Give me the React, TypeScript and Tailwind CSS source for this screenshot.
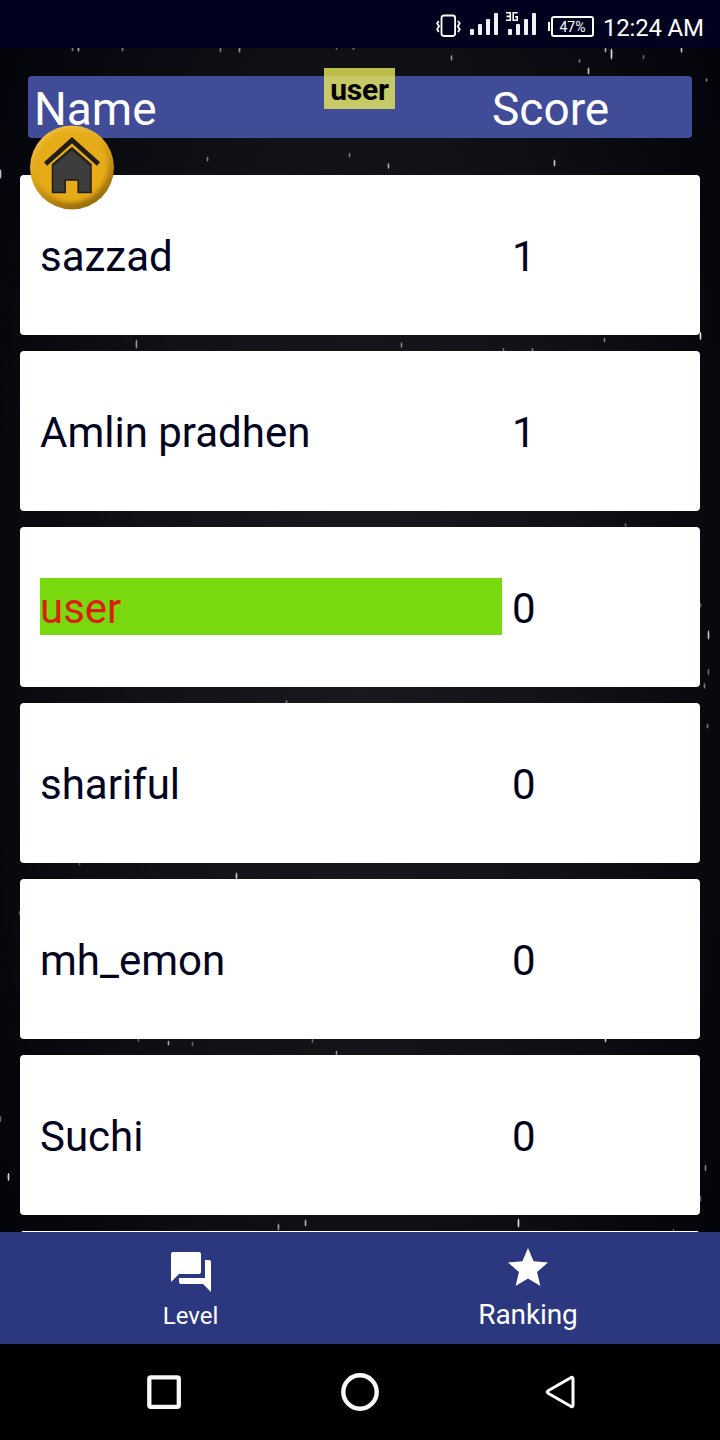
import React from "react";
import { MdForum, MdStar } from "react-icons/md";

interface Player {
  name: string;
  score: number;
}

const CURRENT_USER = "user";

const players: Player[] = [
  { name: "sazzad", score: 1 },
  { name: "Amlin pradhen", score: 1 },
  { name: "user", score: 0 },
  { name: "shariful", score: 0 },
  { name: "mh_emon", score: 0 },
  { name: "Suchi", score: 0 },
];

// x, y, length, opacity
const stars: number[][] = [
  [72, 1, 5, 0.5], [78, 1, 6, 0.7], [122, 1, 5, 0.5], [220, 2, 5, 0.5],
  [239, 2, 6, 0.6], [336, 0, 4, 0.4], [353, 0, 4, 0.5], [451, 10, 6, 0.6],
  [605, 2, 5, 0.7], [611, 6, 11, 0.9], [643, 9, 5, 0.4], [681, 2, 6, 0.8],
  [579, 13, 4, 0.5], [588, 23, 7, 0.8], [706, 32, 4, 0.5], [207, 111, 5, 0.5],
  [349, 107, 5, 0.5], [388, 118, 6, 0.7], [554, 115, 7, 0.8], [0, 126, 9, 0.8],
  [136, 296, 9, 0.6], [401, 297, 6, 0.5], [503, 302, 4, 0.5], [532, 302, 4, 0.5],
  [604, 292, 5, 0.5], [700, 288, 8, 0.9], [625, 477, 4, 0.4], [700, 557, 5, 0.4],
  [708, 587, 9, 0.8], [708, 624, 7, 0.4], [704, 638, 6, 0.5], [286, 654, 4, 0.5],
  [707, 678, 5, 0.5], [79, 816, 4, 0.3], [236, 828, 7, 0.8], [19, 865, 5, 0.3],
  [138, 992, 4, 0.4], [168, 995, 5, 0.7], [192, 996, 5, 0.4], [312, 993, 4, 0.4],
  [336, 1005, 5, 0.6], [605, 992, 5, 0.8], [0, 1071, 6, 0.4], [8, 1129, 8, 0.9],
  [705, 1120, 7, 0.5], [700, 1151, 6, 0.4], [278, 1179, 7, 0.6], [305, 1175, 7, 0.7],
  [518, 1175, 9, 0.9], [673, 1182, 3, 0.3],
];

const NightSky: React.FC = () => (
  <svg className="absolute inset-0" width="720" height="1184" viewBox="0 0 720 1184">
    {stars.map(([x, y, len, opacity], index) => (
      <ellipse key={index} cx={x + 0.5} cy={y} rx={0.9} ry={len / 2} fill="#e8edf2" opacity={opacity} />
    ))}
  </svg>
);

const SignalBars: React.FC = () => (
  <svg width="28" height="22" viewBox="0 0 28 22" fill="#f1f1f8">
    <rect x="0" y="16" width="4" height="6" rx="1" />
    <rect x="8" y="11" width="4" height="11" rx="1" />
    <rect x="16" y="6" width="4" height="16" rx="1" />
    <rect x="24" y="0" width="4" height="22" rx="1" />
  </svg>
);

const StatusBar: React.FC = () => (
  <div className="flex h-12 items-start bg-[#00021e] pl-[436px] text-white">
    <svg className="mt-[14px]" width="25" height="24" viewBox="0 0 25 24" fill="none" stroke="#fff" strokeWidth="1.8">
      <rect x="5.5" y="1.5" width="13.6" height="20.5" rx="2.4" />
      <path d="M2.7 7l-1.5 2.3 1.8 3-1.8 3 1.5 2.7" />
      <path d="M22 7l1.7 2.3-1.9 3 1.9 3L22 18" />
    </svg>
    <div className="mt-[13px] ml-[9px]">
      <SignalBars />
    </div>
    <div className="relative mt-[13px] ml-[10px]">
      <SignalBars />
      {/* covers the top of the first bars */}
      <svg className="absolute -top-px -left-[2px]" width="12" height="9" viewBox="0 0 12 9" fill="none" stroke="#fff" strokeWidth="1.6">
        <path d="M0 .8h4.3v7.4H0M.6 4.4h3.7" />
        <path d="M11.6 .8H7.2v7.4h4V4.8H9.2" />
      </svg>
    </div>
    <div className="mt-[22px] ml-[12px] h-[9px] w-[2px] bg-white" />
    <div className="mt-[16px] ml-px flex h-[21px] w-[43px] items-center justify-center rounded-[3px] border-2 border-white pt-px text-[14px] leading-none">
      47%
    </div>
    <div className="mt-[14px] ml-[9px] text-[24px] leading-[28px] tracking-[-0.2px] whitespace-nowrap">12:24 AM</div>
  </div>
);

const HomeButton: React.FC = () => (
  <button className="absolute top-[77px] left-[30px]" aria-label="Home">
    <svg width="84" height="86" viewBox="0 0 84 86">
      <defs>
        <linearGradient id="rim" x1="0.25" y1="0" x2="0.75" y2="1">
          <stop offset="0" stopColor="#f3c248" />
          <stop offset="0.45" stopColor="#dca318" />
          <stop offset="0.8" stopColor="#a9790f" />
          <stop offset="1" stopColor="#936a0b" />
        </linearGradient>
        <filter id="soften" x="-10%" y="-10%" width="120%" height="120%">
          <feGaussianBlur stdDeviation="2" />
        </filter>
        <filter id="edge" x="-10%" y="-10%" width="120%" height="120%">
          <feGaussianBlur stdDeviation="0.5" />
        </filter>
      </defs>
      <circle cx="42" cy="42.5" r="42" fill="url(#rim)" />
      <circle cx="41.5" cy="41" r="36.5" fill="#e6ab12" filter="url(#soften)" />
      <g filter="url(#edge)">
        <path d="M15.500 39L42 15.200 68.500 39" fill="none" stroke="#231e13" strokeWidth="4.800" />
        <path d="M42 23L61 39.500V67.500H48.200V55H35.200V67.500H22.500V39.500Z" fill="#3d3d3d" stroke="#1f1d18" strokeWidth="1.500" />
        <path d="M23 40L42 23.700 60.500 40" fill="none" stroke="#272420" strokeWidth="2.500" />
      </g>
    </svg>
  </button>
);

const PlayerRow: React.FC<{ player: Player }> = ({ player }) => {
  const isCurrent = player.name === CURRENT_USER;
  return (
    <li className="flex h-40 shrink-0 items-center rounded-[4px] bg-white pb-px pl-5 text-[42px] leading-[61px] text-[#00021e]">
      <span className={`h-[57px] w-[462px] ${isCurrent ? "bg-[#78da0e] text-[#dc1e0c]" : ""}`}>{player.name}</span>
      <span className="ml-[10px] h-[57px]">{player.score}</span>
    </li>
  );
};

const BottomNav: React.FC = () => (
  <nav className="flex h-28 bg-[#2b377f] text-white">
    <div className="flex w-[381px] flex-col items-center pt-[16px]">
      <MdForum size={48} />
      <span className="mt-[6px] text-[24px] leading-[28px]">Level</span>
    </div>
    <div className="flex w-[294px] flex-col items-center pt-[12px]">
      <MdStar size={48} />
      <span className="mt-[7px] text-[28px] leading-[32px] tracking-[-0.1px]">Ranking</span>
    </div>
  </nav>
);

const SystemNav: React.FC = () => (
  <div className="flex h-24 items-center bg-black pl-[146px]">
    <svg width="36" height="36" viewBox="0 0 36 36" fill="none" stroke="#f8f8f8" strokeWidth="4.300">
      <rect x="3.300" y="3.300" width="29.500" height="29.500" rx="1.500" />
    </svg>
    <svg className="ml-[158px]" width="40" height="40" viewBox="0 0 40 40" fill="none" stroke="#f8f8f8" strokeWidth="4.400">
      <circle cx="20" cy="20" r="16.700" />
    </svg>
    <svg className="ml-[165px]" width="32" height="36" viewBox="0 0 32 36" fill="none" stroke="#fff" strokeWidth="3" strokeLinejoin="round">
      <path d="M25.300 4Q28 2.300 28 5V31Q28 33.700 25.300 32L3.500 19.500Q1 18 3.500 16.500Z" />
    </svg>
  </div>
);

export default function App() {
  return (
    <div className="flex h-[1440px] w-[720px] flex-col overflow-hidden bg-black font-['Roboto',sans-serif]">
      <StatusBar />
      <main className="relative h-[1184px] overflow-hidden bg-[radial-gradient(ellipse_60%_90%_at_50%_50%,#191a20_0%,#101216_50%,#030409_100%)] px-5 pt-7">
        <NightSky />
        <div className="relative mx-2 flex h-[62px] rounded-[4px] bg-[#404c98] pl-[6px] text-[46px] leading-[66px] text-white">
          <span className="w-[458px]">Name</span>
          <span>Score</span>
        </div>
        <ul className="relative mt-[37px] flex flex-col gap-4">
          {players.map((player) => (
            <PlayerRow key={player.name} player={player} />
          ))}
          <li className="h-40 shrink-0 rounded-[4px] bg-white" />
        </ul>
        <HomeButton />
        <div className="absolute top-5 left-[324px] h-[41px] w-[71px] bg-[#e9e85a]/80 text-center text-[30px] leading-[43px] font-bold tracking-[-0.2px] text-black">
          {CURRENT_USER}
        </div>
      </main>
      <BottomNav />
      <SystemNav />
    </div>
  );
}
